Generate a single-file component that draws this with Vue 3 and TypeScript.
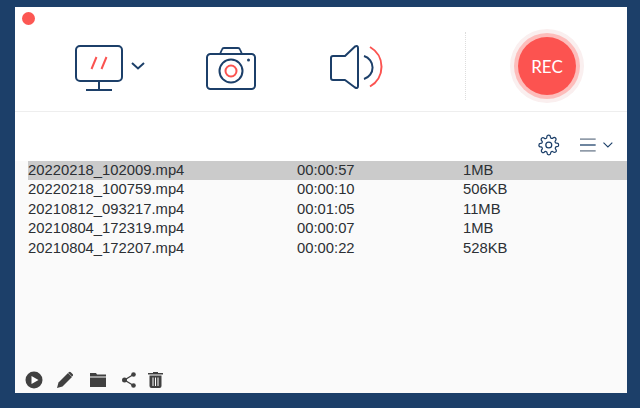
<script setup lang="ts">
interface Row { name: string; dur: string; size: string }
const rows: Row[] = [
  { name: '20220218_102009.mp4', dur: '00:00:57', size: '1MB' },
  { name: '20220218_100759.mp4', dur: '00:00:10', size: '506KB' },
  { name: '20210812_093217.mp4', dur: '00:01:05', size: '11MB' },
  { name: '20210804_172319.mp4', dur: '00:00:07', size: '1MB' },
  { name: '20210804_172207.mp4', dur: '00:00:22', size: '528KB' },
]
</script>

<template>
  <div class="page">
    <div class="window">
      <span class="close"></span>
      <header class="toolbar">
        <div class="screen">
          <svg width="48" height="47" viewBox="0 0 48 47" fill="none">
            <rect x="1" y="1" width="46" height="35" rx="4" stroke="#1c3f69" stroke-width="2" />
            <path d="M24 36v9M11 45h26" stroke="#1c3f69" stroke-width="2" />
            <path d="M16.500 24l5-12M26.500 24l5-12" stroke="#fb5350" stroke-width="2" />
          </svg>
          <svg class="caret" width="14" height="8" viewBox="0 0 14 8" fill="none">
            <path d="M1 1l6 5.500L13 1" stroke="#1c3f69" stroke-width="2" />
          </svg>
        </div>
        <svg class="camera" width="50" height="43" viewBox="0 0 50 43" fill="none">
          <path d="M14 7l2-4.500q.5-1.500 2-1.500h14q1.500 0 2 1.500L36 7" stroke="#1c3f69" stroke-width="1.800" />
          <rect x="1" y="7" width="48" height="35" rx="3.500" stroke="#1c3f69" stroke-width="2" />
          <circle cx="25" cy="24" r="11.500" stroke="#1c3f69" stroke-width="2" />
          <circle cx="25" cy="24" r="5.500" stroke="#fb5350" stroke-width="2" />
          <circle cx="42.500" cy="13" r="1.500" fill="#1c3f69" />
        </svg>
        <svg class="speaker" width="53" height="46" viewBox="0 0 53 46" fill="none">
          <path d="M3 11h12L25 1.500q3-1.500 3 1.500v38q0 3-3 1.500L15 35H3q-2 0-2-2V13q0-2 2-2z" stroke="#1c3f69" stroke-width="2" stroke-linejoin="round" />
          <path d="M34 11A12 12 0 0 1 34 34" stroke="#1c3f69" stroke-width="2" />
          <path d="M40 2A22.700 22.700 0 0 1 40 41.500" stroke="#fb5350" stroke-width="2" />
        </svg>
        <span class="divider"></span>
        <button class="rec">REC</button>
      </header>

      <div class="tools">
        <svg width="22" height="22" viewBox="0 0 24 24" fill="none" stroke="#1c3f69" stroke-width="1.400">
          <circle cx="12" cy="12" r="3.300" />
          <path d="M19.400 15a1.650 1.650 0 0 0 .33 1.820l.06.06a2 2 0 1 1-2.830 2.830l-.06-.06a1.650 1.650 0 0 0-2.800 1.170V21a2 2 0 0 1-4 0v-.09a1.650 1.650 0 0 0-2.900-1.100l-.06.06a2 2 0 1 1-2.830-2.830l.06-.06a1.650 1.650 0 0 0-1.170-2.800H3a2 2 0 0 1 0-4h.09a1.650 1.650 0 0 0 1.100-2.900l-.06-.06a2 2 0 1 1 2.830-2.830l.06.06a1.650 1.650 0 0 0 2.800-1.170V3a2 2 0 0 1 4 0v.09a1.650 1.650 0 0 0 2.800 1.170l.06-.06a2 2 0 1 1 2.830 2.830l-.06.06a1.650 1.650 0 0 0 1.170 2.800H21a2 2 0 0 1 0 4h-.09a1.650 1.650 0 0 0-1.510 1z" />
        </svg>
        <svg class="menu" width="18" height="14" viewBox="0 0 18 14" fill="none">
          <path d="M1 1h16" stroke="#7d8a9a" stroke-width="1.500" />
          <path d="M1 7h16" stroke="#1c3f69" stroke-width="1.300" />
          <path d="M1 13h16" stroke="#7d8a9a" stroke-width="1.500" />
        </svg>
        <svg class="menu-caret" width="10" height="6" viewBox="0 0 10 6" fill="none">
          <path d="M.500.500L5 5l4.500-4.500" stroke="#1c3f69" stroke-width="1.100" />
        </svg>
      </div>

      <div class="list">
        <div v-for="(r, i) in rows" :key="r.name" class="row" :class="{ selected: i === 0 }">
          <span class="c-name">{{ r.name }}</span>
          <span class="c-dur">{{ r.dur }}</span>
          <span>{{ r.size }}</span>
        </div>
      </div>

      <footer class="footer">
        <svg width="18" height="18" viewBox="0 0 18 18">
          <circle cx="9" cy="9" r="8.500" fill="#404040" />
          <path d="M6.500 5l7 4-7 4z" fill="#fff" />
        </svg>
        <svg class="f-pen" width="16" height="17" viewBox="0 0 16 17">
          <path d="M0 17l1.500-5.500L11 2l4 4-9.500 9.500z" fill="#404040" />
          <path d="M11.800 1.200q1-1 2 0l1.800 1.800q1 1 0 2L15 5.500 11.200 1.800z" fill="#404040" />
        </svg>
        <svg class="f-folder" width="16" height="15" viewBox="0 0 16 15">
          <path d="M0 1h6l1 1.500h9V4.500H0z" fill="#404040" />
          <rect x="0" y="5.500" width="16" height="9.500" fill="#404040" />
        </svg>
        <svg class="f-share" width="14" height="16" viewBox="0 0 14 16">
          <path d="M11.500 2.500L2.500 8l9 5.500" stroke="#404040" stroke-width="1.300" fill="none" />
          <circle cx="11.500" cy="2.500" r="2.300" fill="#404040" />
          <circle cx="2.500" cy="8" r="2.500" fill="#404040" />
          <circle cx="11.500" cy="13.500" r="2.300" fill="#404040" />
        </svg>
        <svg class="f-trash" width="15" height="17" viewBox="0 0 15 17">
          <path d="M5 1h5v1h5v1.500H0V2h5z" fill="#404040" />
          <path d="M1.500 4.500h12V15q0 2-2 2h-8q-2 0-2-2z" fill="#404040" />
          <path d="M5 6.500V15M7.500 6.500V15M10 6.500V15" stroke="#fff" stroke-width="1" />
        </svg>
      </footer>
    </div>
  </div>
</template>

<style>
html, body { margin: 0; background: #1c3f69; }
</style>

<style scoped>
.page {
  width: 640px;
  height: 408px;
  box-sizing: border-box;
  padding: 7px 13px 15px 15px;
  background: #1c3f69;
  overflow: hidden;
}
.window {
  position: relative;
  height: 386px;
  display: flex;
  flex-direction: column;
  background: #fff;
  font-family: "Liberation Sans", Arial, sans-serif;
  color: #2c3034;
}
.close {
  position: absolute;
  left: 7px;
  top: 5px;
  width: 13px;
  height: 13px;
  border-radius: 50%;
  background: #fc5753;
}
.toolbar {
  flex: none;
  height: 92px;
  display: flex;
  align-items: center;
  padding: 12px 0 0 60px;
  border-bottom: 1px solid #eeeeee;
}
.screen { display: flex; align-items: center; margin-top: 7px; }
.caret { margin-left: 8px; margin-top: -5px; }
.camera { margin-left: 61px; margin-top: 7px; }
.speaker { margin-left: 74px; margin-top: 6px; }
.divider {
  width: 0;
  height: 68px;
  margin-left: 82px;
  margin-top: 2px;
  border-left: 1px dotted #dddddd;
}
.rec {
  width: 58px;
  height: 58px;
  margin-left: 52px;
  margin-top: 2px;
  padding: 0;
  border: 0;
  border-radius: 50%;
  background: #fc5350;
  box-shadow: 0 0 0 4px #fdbdbb, 0 0 0 8px #faefef;
  color: #fff;
  font: 17px Lato, "Liberation Sans", sans-serif;
}
.tools {
  flex: none;
  height: 49px;
  display: flex;
  align-items: center;
  box-sizing: border-box;
  padding: 17px 14px 0 523px;
}
.menu { margin-left: 19px; }
.menu-caret { margin-left: 7px; }
.list {
  flex: 1;
  padding-left: 13px;
  background: #fafafa;
  font-size: 14.800px;
}
.row {
  height: 19.400px;
  line-height: 19.400px;
  display: flex;
  white-space: nowrap;
}
.row.selected { background: #cbcbcb; }
.c-name { width: 269px; }
.c-dur { width: 166px; }
.footer {
  flex: none;
  height: 27px;
  display: flex;
  align-items: center;
  padding: 2px 0 0 10px;
  background: #fafafa;
}
.f-pen { margin-left: 14px; }
.f-folder { margin-left: 17px; }
.f-share { margin-left: 16px; }
.f-trash { margin-left: 12px; }
</style>
